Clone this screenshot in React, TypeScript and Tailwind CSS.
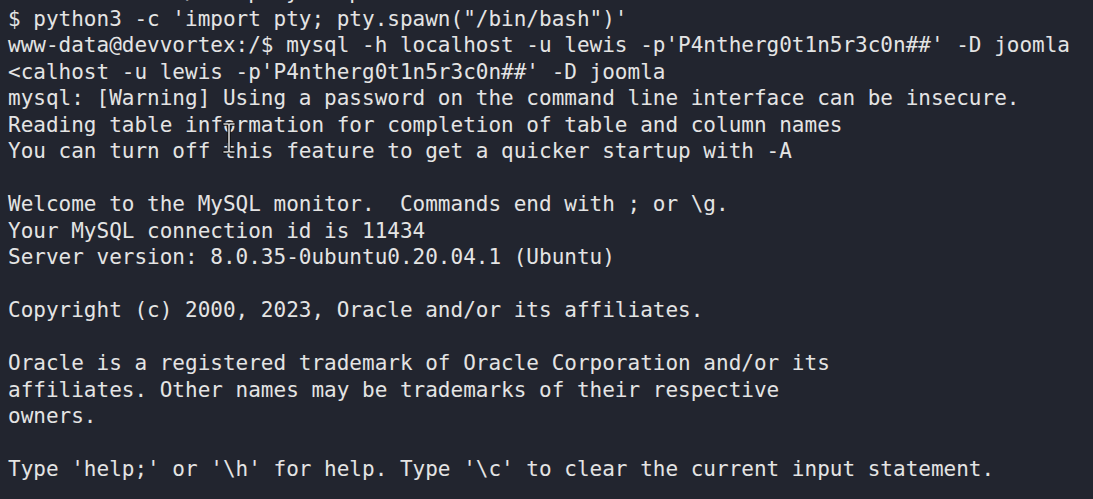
import React from 'react'

const lines = [
    "              /    p  y    p",
    "$ python3 -c 'import pty; pty.spawn(\"/bin/bash\")'",
    "www-data@devvortex:/$ mysql -h localhost -u lewis -p'P4ntherg0t1n5r3c0n##' -D joomla",
    "<calhost -u lewis -p'P4ntherg0t1n5r3c0n##' -D joomla",
    "mysql: [Warning] Using a password on the command line interface can be insecure.",
    "Reading table information for completion of table and column names",
    "You can turn off this feature to get a quicker startup with -A",
    "",
    "Welcome to the MySQL monitor.  Commands end with ; or \\g.",
    "Your MySQL connection id is 11434",
    "Server version: 8.0.35-0ubuntu0.20.04.1 (Ubuntu)",
    "",
    "Copyright (c) 2000, 2023, Oracle and/or its affiliates.",
    "",
    "Oracle is a registered trademark of Oracle Corporation and/or its",
    "affiliates. Other names may be trademarks of their respective",
    "owners.",
    "",
    "Type 'help;' or '\\h' for help. Type '\\c' to clear the current input statement.",
]

const IBeam = () => (
    <svg className="absolute left-[222px] top-[122px]" width="14" height="32" viewBox="0 0 14 32">
        <path d="M2 2 H5.5 Q7 2 7 4 V28 Q7 30 5.5 30 H2 M12 2 H8.5 Q7 2 7 4 M7 28 Q7 30 8.5 30 H12"
            fill="none" stroke="#111" strokeWidth="3.5" strokeLinecap="round" />
        <path d="M2 2 H5.5 Q7 2 7 4 V28 Q7 30 5.5 30 H2 M12 2 H8.5 Q7 2 7 4 M7 28 Q7 30 8.5 30 H12"
            fill="none" stroke="#d8d8d8" strokeWidth="1.6" strokeLinecap="round" />
    </svg>
)

const App = () => {
    return (
        <div className="relative w-[1093px] h-[499px] overflow-hidden bg-[#22252f]">
            <pre className="mt-[-20.75px] pl-2 font-['DejaVu_Sans_Mono',monospace] text-[21px] leading-[26.5px] text-[#e4e4e4] whitespace-pre">
                {lines.map((line, index) => (
                    <div key={index} className="h-[26.5px]">{line}</div>
                ))}
            </pre>
            <IBeam />
        </div>
    )
}

export default App
